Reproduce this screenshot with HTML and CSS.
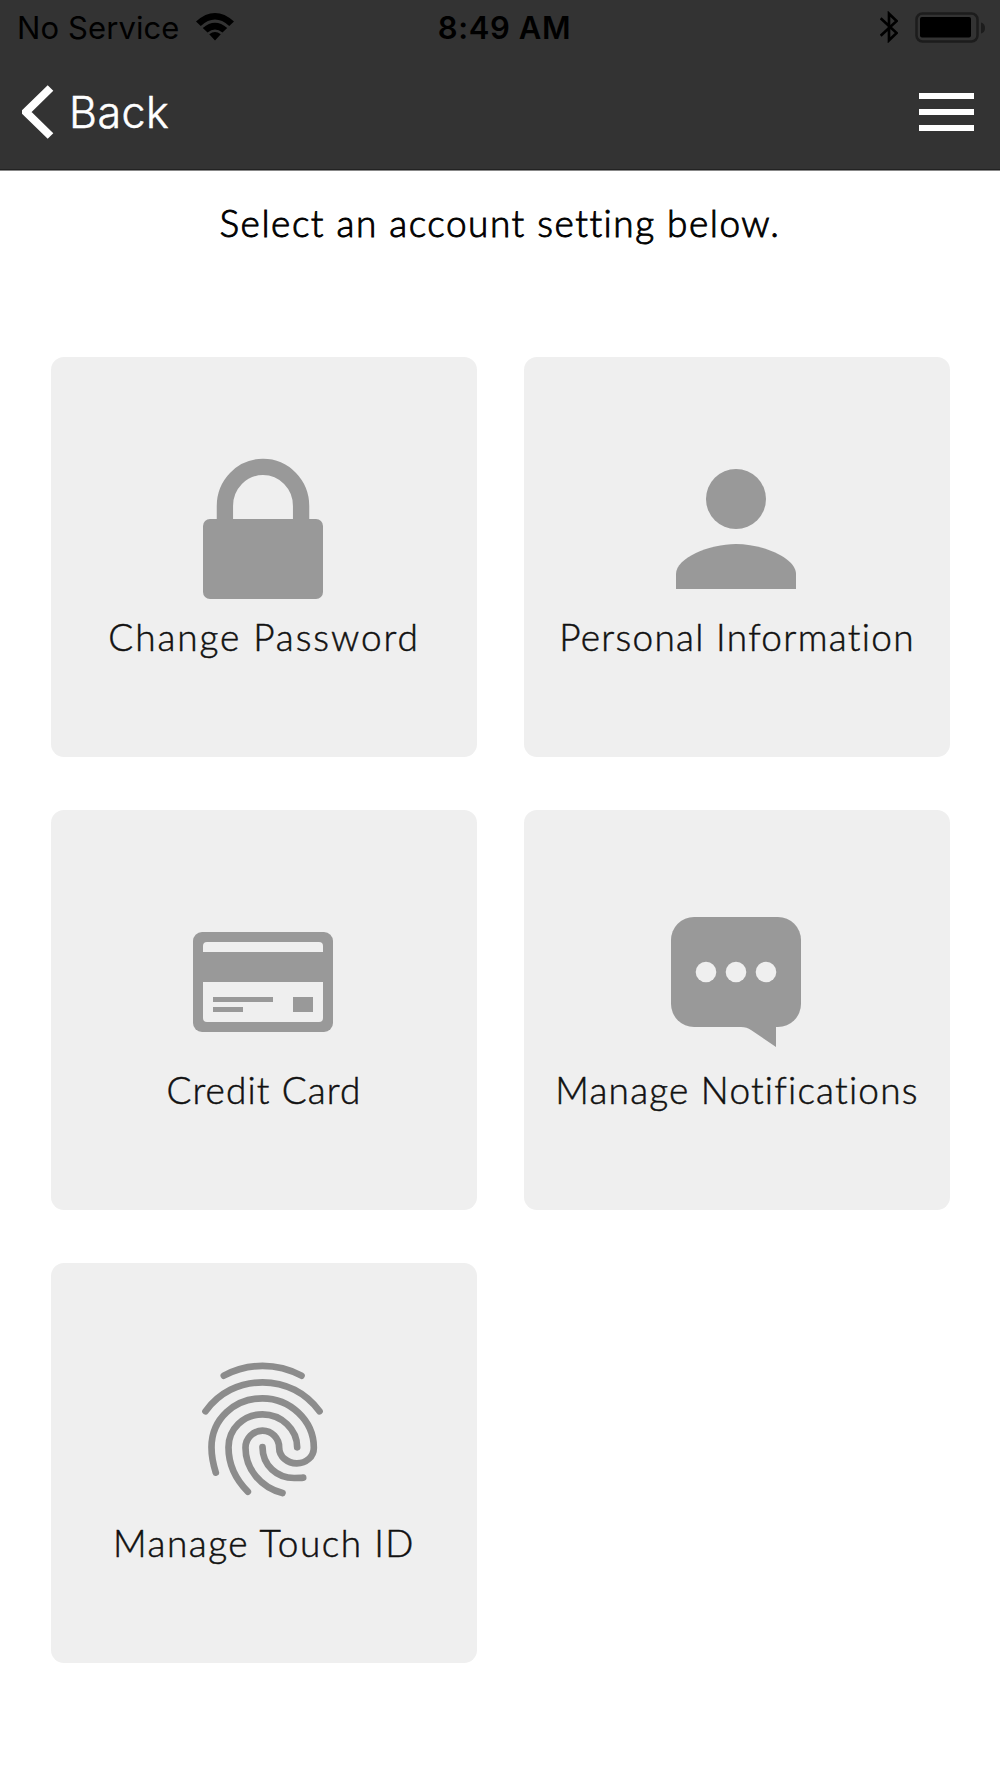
FILE: index.html
```html
<!DOCTYPE html>
<html lang="en">
<head>
  <meta charset="UTF-8">
  <meta name="viewport" content="width=device-width, initial-scale=1.0">
  <title>Account Settings</title>
  <link rel="stylesheet" href="styles.css">
</head>
<body>
  <header>
    <div class="status-bar">
      <div class="carrier">
        <span class="carrier-name">No Service</span>
        <svg class="wifi" viewBox="0 0 112 82" width="38" height="28">
          <path d="M0 25Q56-25 112 25L98 38Q56 0 14 38ZM20 44Q56 13 92 44L78 57Q56 39 34 57ZM39 62Q56 50 73 62L56 81Z"/>
        </svg>
      </div>
      <span class="time">8:49 AM</span>
      <div class="indicators">
        <svg class="bluetooth" viewBox="0 0 54 96" width="18" height="32">
          <path d="M2 22L50 66L27 88V8L50 30L2 74"/>
        </svg>
        <svg class="battery" viewBox="0 0 72 32" width="72" height="32">
          <rect class="battery-case" x="1.500" y="2.500" width="61" height="28" rx="6"/>
          <rect x="5" y="6" width="51" height="20.500" rx="2"/>
          <path class="battery-tip" d="M66 11.500q4 1 4 5.500t-4 5.500z"/>
        </svg>
      </div>
    </div>
    <nav>
      <a class="back" href="#">
        <svg viewBox="0 0 32 54" width="32" height="54"><path d="M28.500 3L4 27L28.500 51"/></svg>
        <span>Back</span>
      </a>
      <div class="menu"><i></i><i></i><i></i></div>
    </nav>
  </header>

  <main>
    <p class="intro">Select an account setting below.</p>

    <div class="grid">
      <a class="card" href="#">
        <svg viewBox="0 0 160 160">
          <rect x="20" y="70" width="120" height="80" rx="7"/>
          <path class="shackle" d="M41.900 72V57a38 39 0 0 1 76.200 0V72"/>
        </svg>
        <span class="label change">Change Password</span>
      </a>
      <a class="card" href="#">
        <svg viewBox="0 0 160 160">
          <circle cx="80" cy="50" r="30"/>
          <path d="M20 140V125C20 109 53 95 80 95s60 14 60 30v15z"/>
        </svg>
        <span class="label personal">Personal Information</span>
      </a>
      <a class="card" href="#">
        <svg viewBox="0 0 160 160">
          <rect x="10" y="30" width="140" height="100" rx="9"/>
          <path class="cut" d="M20 50V44a4 4 0 0 1 4-4H136a4 4 0 0 1 4 4V50zM20 80H140V116a4 4 0 0 1-4 4H24a4 4 0 0 1-4-4z"/>
          <path d="M30 95H90v5H30zM30 105H60v5H30zM110 95h20v15h-20z"/>
        </svg>
        <span class="label credit">Credit Card</span>
      </a>
      <a class="card" href="#">
        <svg viewBox="0 0 160 160">
          <rect x="15" y="15" width="130" height="110" rx="23"/>
          <path d="M85 122V125Q91 125 95 128L120 145V122z"/>
          <g class="cut">
            <circle cx="50" cy="70" r="10.300"/>
            <circle cx="80" cy="70" r="10.300"/>
            <circle cx="110" cy="70" r="10.300"/>
          </g>
        </svg>
        <span class="label notify">Manage Notifications</span>
      </a>
      <a class="card" href="#">
        <svg viewBox="-19.500 15 480 480">
          <g class="finger">
            <path d="M103 77C176 38 262 38 336 77"/>
            <path d="M48 184C88 128 150 97 219 97s130 31 171 87"/>
            <path d="M79 368C71 343 66 318 66 292C66 205 137 145 219 145s154 66 154 148c0 27-23 47-51 47s-53-20-53-47c0-28-22-51-50-51s-51 23-51 51c0 63 45 119 111 136"/>
            <path d="M175 425C135 385 117 345 117 292c0-55 45-99 102-99s104 45 104 99"/>
            <path d="M219 291c0 56 44 93 95 93 12 0 20 0 27-1"/>
          </g>
        </svg>
        <span class="label touch">Manage Touch ID</span>
      </a>
    </div>
  </main>
</body>
</html>
```
FILE: styles.css
```css
* { box-sizing: border-box; }
body { margin: 0; background: #fff; font-family: Lato, sans-serif; color: #111; }
a { color: inherit; text-decoration: none; }
svg { display: block; }

header { height: 171px; background: #333; border-bottom: 1px solid #888; box-shadow: inset 0 -1px #222; font-family: Inter, sans-serif; }
.status-bar { display: grid; grid-template-columns: 1fr auto 1fr; height: 54px; padding: 0 13px 0 17px; align-items: center; color: #000; }
.carrier { display: flex; align-items: center; gap: 16px; }
.carrier-name { font-size: 31px; letter-spacing: 0.1px; }
.time { margin-left: 5px; font-size: 31px; font-weight: 600; letter-spacing: 0.6px; }
.indicators { display: flex; align-items: center; justify-content: flex-end; gap: 17px; }
.bluetooth path { fill: none; stroke: #000; stroke-width: 8; }
.battery-case { fill: none; stroke: #1c1c1c; stroke-width: 2.5; }
.battery-tip { fill: #1c1c1c; }

nav { display: flex; justify-content: space-between; align-items: center; height: 116px; padding: 0 26px 0 22px; }
.back { display: flex; align-items: center; gap: 15px; color: #fff; font-size: 43px; font-weight: 300; letter-spacing: 0.5px; }
.back span { -webkit-text-stroke: 0.5px #fff; }
.back path { fill: none; stroke: #fff; stroke-width: 8; }
.menu { display: flex; flex-direction: column; gap: 10px; width: 55px; }
.menu i { height: 6px; background: #fff; }

.intro { margin: 0; height: 186px; padding-top: 30px; font-size: 37px; font-weight: 300; line-height: 44px; letter-spacing: 1.5px; text-align: center; color: #000; -webkit-text-stroke: 0.9px #000; }
.grid { display: grid; grid-template-columns: 426px 426px; grid-auto-rows: 400px; gap: 53px 47px; padding-left: 51px; }
.card { display: flex; flex-direction: column; align-items: center; padding-top: 92px; background: #efefef; border-radius: 13px; }
.card svg { width: 160px; height: 160px; margin-right: 2px; fill: #999; }
.card .cut { fill: #efefef; }
.card .shackle { fill: none; stroke: #999; stroke-width: 16.3; }
.card .finger { fill: none; stroke: #8c8c8c; stroke-width: 20; stroke-linecap: round; }
.label { margin-top: 6px; font-size: 37px; font-weight: 300; line-height: 44px; white-space: nowrap; -webkit-text-stroke: 0.5px #111; }
.change { letter-spacing: 1.9px; }
.personal { letter-spacing: 1.3px; }
.credit { letter-spacing: 1.1px; }
.notify { letter-spacing: 1.2px; }
.touch { letter-spacing: 1.5px; }
```
